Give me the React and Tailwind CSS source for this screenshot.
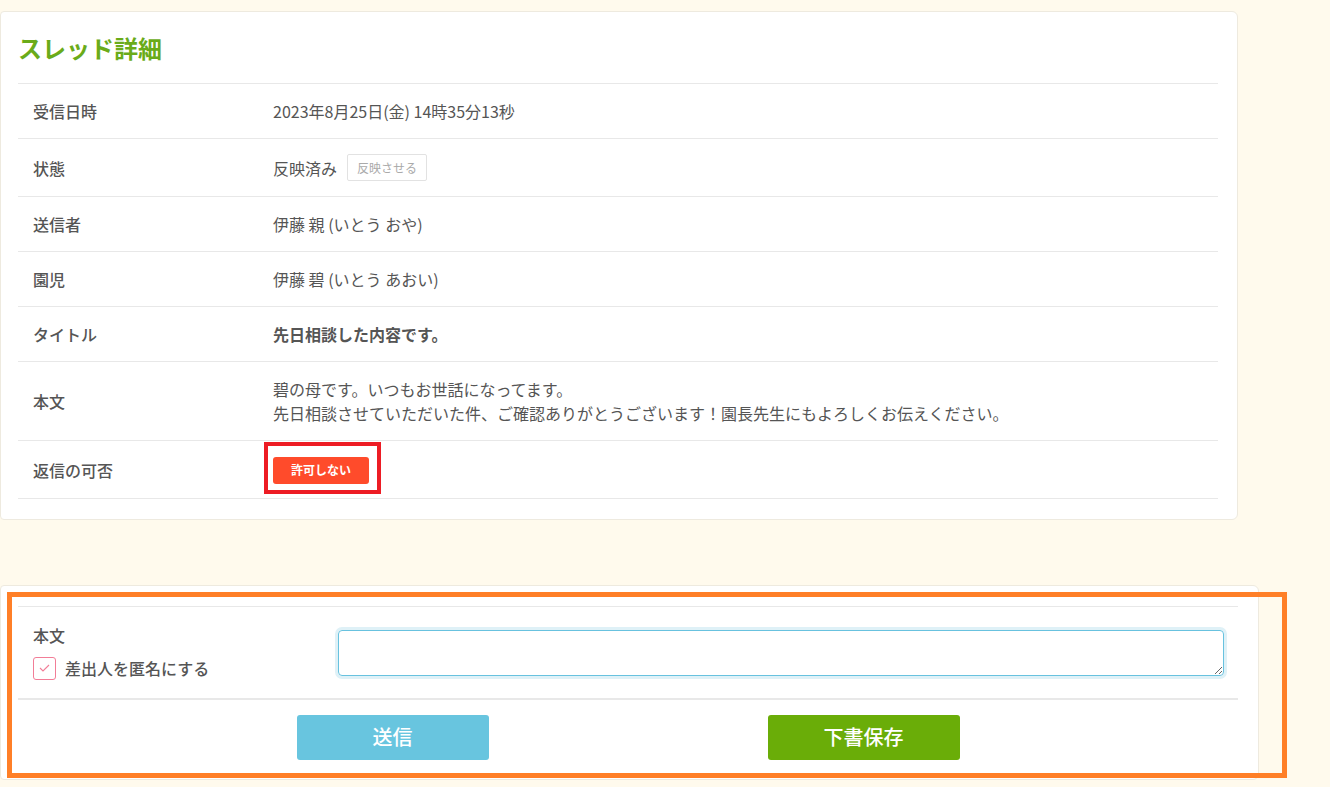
const rows = [
  { label: '受信日時', value: '2023年8月25日(金) 14時35分13秒' },
  { label: '状態', value: 'status' },
  { label: '送信者', value: '伊藤 親 (いとう おや)' },
  { label: '園児', value: '伊藤 碧 (いとう あおい)' },
  { label: 'タイトル', value: '先日相談した内容です。', bold: true },
  { label: '本文', value: 'body' },
  { label: '返信の可否', value: 'reply' }
]

function Value({ row }) {
  if (row.value === 'status') {
    return (
      <div className="flex items-center gap-[10px]">
        <span>反映済み</span>
        <span className="inline-flex h-[27px] items-center rounded-[2px] border border-[#e2e2e2] px-[9px] text-[12px] text-[#aaaaaa]">
          反映させる
        </span>
      </div>
    )
  }
  if (row.value === 'body') {
    return (
      <div>
        <p>碧の母です。いつもお世話になってます。</p>
        <p>先日相談させていただいた件、ご確認ありがとうございます！園長先生にもよろしくお伝えください。</p>
      </div>
    )
  }
  if (row.value === 'reply') {
    return (
      <span className="inline-flex h-[27px] w-[96px] items-center justify-center rounded-[3px] bg-[#ff4b2b] text-[12px] font-bold text-white">
        許可しない
      </span>
    )
  }
  return <span className={row.bold ? 'font-bold' : ''}>{row.value}</span>
}

function App() {
  return (
    <div
      className="relative min-h-[787px] bg-[#fffaed] pt-[11px] text-[16px] text-[#555555]"
      style={{ fontFamily: '"Noto Sans CJK JP", "Noto Sans", sans-serif' }}
    >
      {/* thread detail card */}
      <div className="w-[1238px] rounded-r-[6px] rounded-l-[4px] border border-[#eeeadf] bg-white pb-[20px] pl-[17px] pr-[19px]">
        <h1 className="flex h-[71px] items-center text-[24px] font-bold text-[#6aab19]">スレッド詳細</h1>
        <div className="border-t border-[#e8e8e8]">
          {rows.map((row) => (
            <div key={row.label} className="flex items-center border-b border-[#e8e8e8] py-[15px] leading-6 last:pb-[14px]">
              <div className="w-[255px] shrink-0 pl-[15px] font-medium">{row.label}</div>
              <div className="flex-1">
                <Value row={row} />
              </div>
            </div>
          ))}
        </div>
      </div>

      {/* reply form card */}
      <div className="mt-[65px] w-[1259px] rounded-r-[6px] rounded-l-[4px] border border-[#eeeadf] bg-white pl-[17px] pr-[20px] pt-[20px]">
        <div className="flex items-start border-t border-b-2 border-[#e8e8e8] pt-[16px] pb-[18px]">
          <div className="w-[320px] shrink-0 pl-[15px]">
            <div className="font-medium leading-6">本文</div>
            <label className="mt-[10px] flex h-[23px] items-center gap-[9px] font-medium">
              <span className="flex h-[23px] w-[23px] items-center justify-center rounded-[3px] border border-[#f27d97] bg-white">
                <svg width="11" height="8" viewBox="0 0 11 8" fill="none">
                  <polyline points="1,4 4,7 10,1" stroke="#f27d97" strokeWidth="1.1" />
                </svg>
              </span>
              差出人を匿名にする
            </label>
          </div>
          <textarea className="mt-[7px] h-[46px] flex-1 mr-[14px] rounded-[4px] border border-[#68c2df] outline-none ring-[3px] ring-[#dff1f7]" />
        </div>
        <div className="flex items-center justify-center gap-[279px] pt-[15px] pb-[19px]">
          <button className="h-[45px] w-[192px] rounded-[3px] bg-[#68c5df] text-[20px] font-medium text-white">送信</button>
          <button className="h-[45px] w-[192px] rounded-[3px] bg-[#6aad08] text-[20px] font-medium text-white">下書保存</button>
        </div>
      </div>

      {/* annotation overlays */}
      <div className="pointer-events-none absolute left-[264px] top-[442px] h-[52px] w-[117px] border-[4px] border-[#ed1c24]" />
      <div className="pointer-events-none absolute left-[7px] top-[592px] h-[186px] w-[1280px] border-[5px] border-[#ff7f27]" />
    </div>
  )
}

export default App
